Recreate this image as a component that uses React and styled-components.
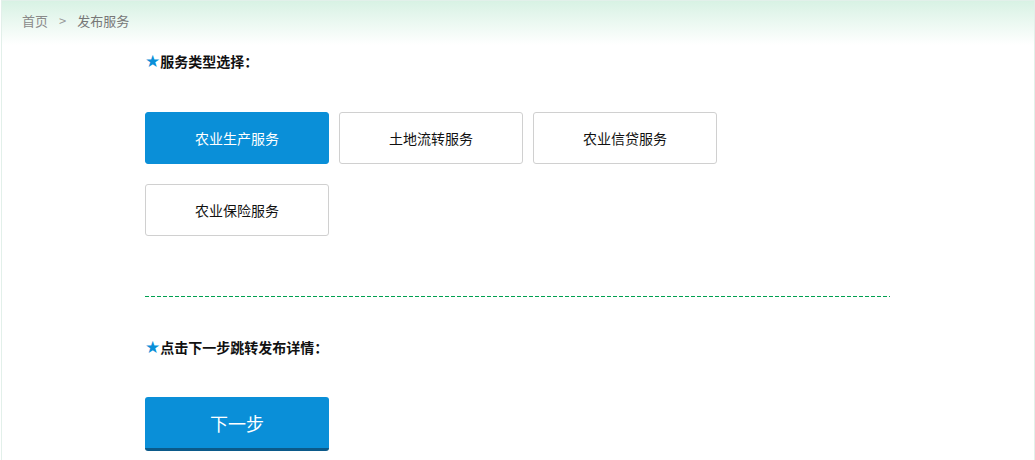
import React, { useState } from "react";
import styled, { createGlobalStyle } from "styled-components";

const GlobalStyle = createGlobalStyle`
  html, body {
    margin: 0;
    padding: 0;
    background: #fff;
    font-family: "Microsoft YaHei", "Noto Sans CJK SC", "Liberation Sans", sans-serif;
  }
`;

const services = ["农业生产服务", "土地流转服务", "农业信贷服务", "农业保险服务"];

const App = () => {
  const [active, setActive] = useState(0);

  return (
    <>
      <GlobalStyle />
      <Page>
        <Crumbs>
          <CrumbLink>首页</CrumbLink>
          <Sep>&gt;</Sep>
          <CrumbCurrent>发布服务</CrumbCurrent>
        </Crumbs>
        <Content>
          <Title $top={6}>
            <Star>★</Star>服务类型选择：
          </Title>
          <Options>
            {services.map((s, i) => (
              <Option key={s} $active={i === active} onClick={() => setActive(i)}>
                {s}
              </Option>
            ))}
          </Options>
          <Divider />
          <Title $top={40}>
            <Star>★</Star>点击下一步跳转发布详情：
          </Title>
          <NextButton>下一步</NextButton>
        </Content>
      </Page>
    </>
  );
};

export default App;

const Page = styled.div`
  box-sizing: border-box;
  width: 1034px;
  height: 460px;
  margin-left: 1px;
  border: 1px solid #e2f0ea;
  border-bottom: none;
  overflow: hidden;
`;

const Crumbs = styled.div`
  box-sizing: border-box;
  display: flex;
  align-items: center;
  height: 44px;
  padding: 0 0 6px 20px;
  background: linear-gradient(to bottom, #d8f2e4 0%, #ffffff 100%);
  font-size: 13px;
  color: #888;
`;

const CrumbLink = styled.span`
  color: #8a8a8a;
`;

const Sep = styled.span`
  margin: 0 11px;
  color: #999;
`;

const CrumbCurrent = styled.span`
  color: #777;
`;

const Content = styled.div`
  padding-left: 143px;
`;

const Title = styled.div`
  display: flex;
  align-items: center;
  height: 20px;
  margin-top: ${(p) => p.$top}px;
  font-size: 14px;
  font-weight: bold;
  color: #111;
`;

const Star = styled.span`
  color: #0a8fd8;
  font-size: 17px;
  line-height: 1;
  font-family: "DejaVu Sans", sans-serif;
`;

const Options = styled.div`
  display: grid;
  grid-template-columns: repeat(3, 184px);
  column-gap: 10px;
  row-gap: 20px;
  margin-top: 41px;
`;

const Option = styled.button`
  box-sizing: border-box;
  height: 52px;
  border: 1px solid ${(p) => (p.$active ? "#0a8fd8" : "#d0d0d0")};
  border-radius: 3px;
  background: ${(p) => (p.$active ? "#0a8fd8" : "#fff")};
  color: ${(p) => (p.$active ? "#fff" : "#111")};
  font-family: inherit;
  font-size: 14px;
  cursor: pointer;
`;

const Divider = styled.div`
  width: 745px;
  height: 1px;
  margin-top: 60px;
  background: repeating-linear-gradient(
    to right,
    #00a050 0,
    #00a050 4px,
    transparent 4px,
    transparent 6px
  );
`;

const NextButton = styled.button`
  display: block;
  box-sizing: border-box;
  width: 184px;
  height: 54px;
  margin-top: 40px;
  border: none;
  border-bottom: 3px solid #0b5a8a;
  border-radius: 3px;
  background: #0a8fd8;
  color: #fff;
  font-family: inherit;
  font-size: 18px;
  cursor: pointer;
`;
